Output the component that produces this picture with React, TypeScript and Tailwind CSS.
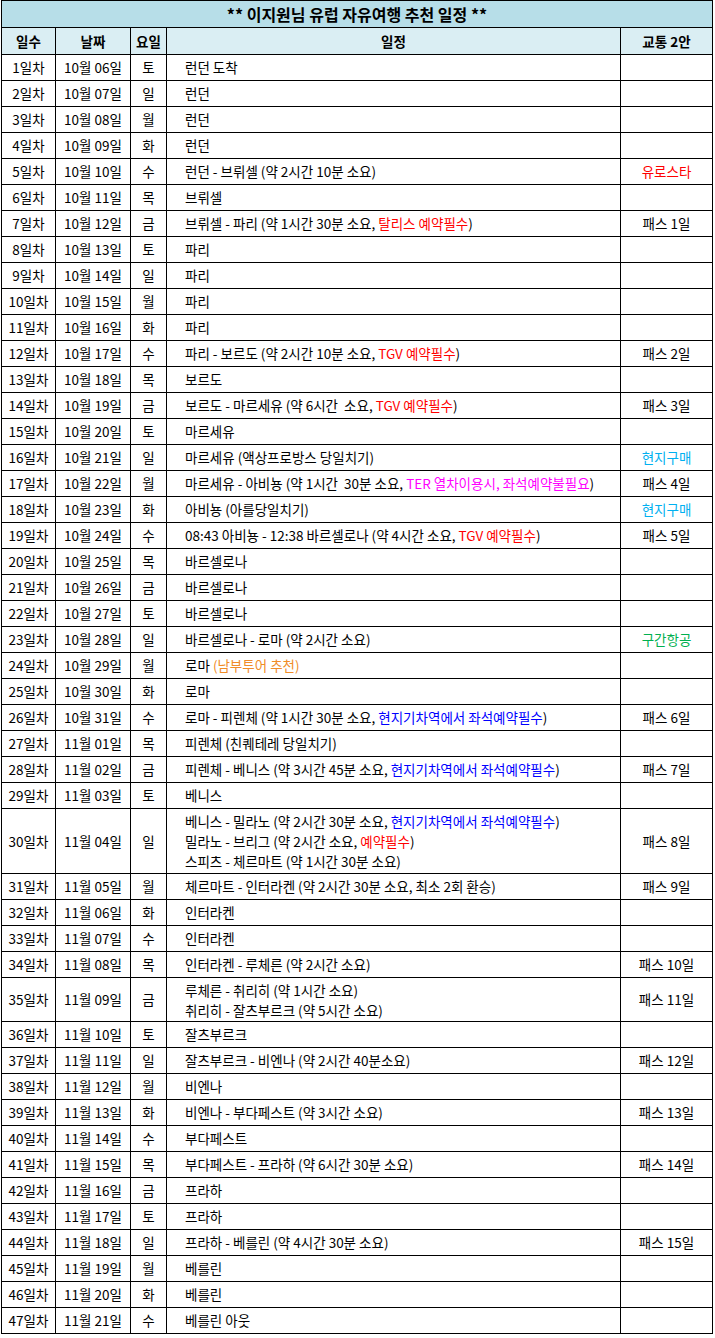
import React from "react";

type Seg = { t: string; c?: string };
type Row = {
  n: number;
  m: string;
  d: string;
  w: string;
  lines: Seg[][];
  tr?: Seg;
  h?: string;
};

const K = (t: string): Seg => ({ t });
const R = (t: string): Seg => ({ t, c: "text-[#ff0000]" });
const B = (t: string): Seg => ({ t, c: "text-[#0000ff]" });
const M = (t: string): Seg => ({ t, c: "text-[#ff00ff]" });
const O = (t: string): Seg => ({ t, c: "text-[#f08c28]" });
const C = (t: string): Seg => ({ t, c: "text-[#00b0f0]" });
const G = (t: string): Seg => ({ t, c: "text-[#00b050]" });

const P = (n: number): Seg => K(`패스 ${n}일`);

const rows: Row[] = [
  { n: 1, m: "10", d: "06", w: "토", lines: [[K("런던 도착")]] },
  { n: 2, m: "10", d: "07", w: "일", lines: [[K("런던")]] },
  { n: 3, m: "10", d: "08", w: "월", lines: [[K("런던")]] },
  { n: 4, m: "10", d: "09", w: "화", lines: [[K("런던")]] },
  { n: 5, m: "10", d: "10", w: "수", lines: [[K("런던 - 브뤼셀 (약 2시간 10분 소요)")]], tr: R("유로스타") },
  { n: 6, m: "10", d: "11", w: "목", lines: [[K("브뤼셀")]] },
  { n: 7, m: "10", d: "12", w: "금", lines: [[K("브뤼셀 - 파리 (약 1시간 30분 소요, "), R("탈리스 예약필수"), K(")")]], tr: P(1) },
  { n: 8, m: "10", d: "13", w: "토", lines: [[K("파리")]] },
  { n: 9, m: "10", d: "14", w: "일", lines: [[K("파리")]] },
  { n: 10, m: "10", d: "15", w: "월", lines: [[K("파리")]] },
  { n: 11, m: "10", d: "16", w: "화", lines: [[K("파리")]] },
  { n: 12, m: "10", d: "17", w: "수", lines: [[K("파리 - 보르도 (약 2시간 10분 소요, "), R("TGV 예약필수"), K(")")]], tr: P(2) },
  { n: 13, m: "10", d: "18", w: "목", lines: [[K("보르도")]] },
  { n: 14, m: "10", d: "19", w: "금", lines: [[K("보르도 - 마르세유 (약 6시간  소요, "), R("TGV 예약필수"), K(")")]], tr: P(3) },
  { n: 15, m: "10", d: "20", w: "토", lines: [[K("마르세유")]] },
  { n: 16, m: "10", d: "21", w: "일", lines: [[K("마르세유 (액상프로방스 당일치기)")]], tr: C("현지구매") },
  { n: 17, m: "10", d: "22", w: "월", lines: [[K("마르세유 - 아비뇽 (약 1시간  30분 소요, "), M("TER 열차이용시, 좌석예약불필요"), K(")")]], tr: P(4) },
  { n: 18, m: "10", d: "23", w: "화", lines: [[K("아비뇽 (아를당일치기)")]], tr: C("현지구매") },
  { n: 19, m: "10", d: "24", w: "수", lines: [[K("08:43 아비뇽 - 12:38 바르셀로나 (약 4시간 소요, "), R("TGV 예약필수"), K(")")]], tr: P(5) },
  { n: 20, m: "10", d: "25", w: "목", lines: [[K("바르셀로나")]] },
  { n: 21, m: "10", d: "26", w: "금", lines: [[K("바르셀로나")]] },
  { n: 22, m: "10", d: "27", w: "토", lines: [[K("바르셀로나")]] },
  { n: 23, m: "10", d: "28", w: "일", lines: [[K("바르셀로나 - 로마 (약 2시간 소요)")]], tr: G("구간항공") },
  { n: 24, m: "10", d: "29", w: "월", lines: [[K("로마 "), O("(남부투어 추천)")]] },
  { n: 25, m: "10", d: "30", w: "화", lines: [[K("로마")]] },
  { n: 26, m: "10", d: "31", w: "수", lines: [[K("로마 - 피렌체 (약 1시간 30분 소요, "), B("현지기차역에서 좌석예약필수"), K(")")]], tr: P(6) },
  { n: 27, m: "11", d: "01", w: "목", lines: [[K("피렌체 (친퀘테레 당일치기)")]] },
  { n: 28, m: "11", d: "02", w: "금", lines: [[K("피렌체 - 베니스 (약 3시간 45분 소요, "), B("현지기차역에서 좌석예약필수"), K(")")]], tr: P(7) },
  { n: 29, m: "11", d: "03", w: "토", lines: [[K("베니스")]] },
  {
    n: 30, m: "11", d: "04", w: "일", h: "h-[65px]",
    lines: [
      [K("베니스 - 밀라노 (약 2시간 30분 소요, "), B("현지기차역에서 좌석예약필수"), K(")")],
      [K("밀라노 - 브리그 (약 2시간 소요, "), R("예약필수"), K(")")],
      [K("스피츠 - 체르마트 (약 1시간 30분 소요)")],
    ],
    tr: P(8),
  },
  { n: 31, m: "11", d: "05", w: "월", lines: [[K("체르마트 - 인터라켄 (약 2시간 30분 소요, 최소 2회 환승)")]], tr: P(9) },
  { n: 32, m: "11", d: "06", w: "화", lines: [[K("인터라켄")]] },
  { n: 33, m: "11", d: "07", w: "수", lines: [[K("인터라켄")]] },
  { n: 34, m: "11", d: "08", w: "목", lines: [[K("인터라켄 - 루체른 (약 2시간 소요)")]], tr: P(10) },
  {
    n: 35, m: "11", d: "09", w: "금", h: "h-[44px]",
    lines: [[K("루체른 - 취리히 (약 1시간 소요)")], [K("취리히 - 잘츠부르크 (약 5시간 소요)")]],
    tr: P(11),
  },
  { n: 36, m: "11", d: "10", w: "토", lines: [[K("잘츠부르크")]] },
  { n: 37, m: "11", d: "11", w: "일", lines: [[K("잘츠부르크 - 비엔나 (약 2시간 40분소요)")]], tr: P(12) },
  { n: 38, m: "11", d: "12", w: "월", lines: [[K("비엔나")]] },
  { n: 39, m: "11", d: "13", w: "화", lines: [[K("비엔나 - 부다페스트 (약 3시간 소요)")]], tr: P(13) },
  { n: 40, m: "11", d: "14", w: "수", lines: [[K("부다페스트")]] },
  { n: 41, m: "11", d: "15", w: "목", lines: [[K("부다페스트 - 프라하 (약 6시간 30분 소요)")]], tr: P(14) },
  { n: 42, m: "11", d: "16", w: "금", lines: [[K("프라하")]] },
  { n: 43, m: "11", d: "17", w: "토", lines: [[K("프라하")]] },
  { n: 44, m: "11", d: "18", w: "일", lines: [[K("프라하 - 베를린 (약 4시간 30분 소요)")]], tr: P(15) },
  { n: 45, m: "11", d: "19", w: "월", lines: [[K("베를린")]] },
  { n: 46, m: "11", d: "20", w: "화", lines: [[K("베를린")]] },
  { n: 47, m: "11", d: "21", w: "수", lines: [[K("베를린 아웃")]] },
];

const cell = "border border-black p-0 align-middle";

function Segs({ segs, multi }: { segs: Seg[]; multi: boolean }) {
  return (
    <div className={`whitespace-pre ${multi ? "leading-[20px]" : "leading-[17px]"}`}>
      {segs.map((s, i) => (
        <span key={i} className={s.c}>
          {s.t}
        </span>
      ))}
    </div>
  );
}

export default function App() {
  return (
    <div
      className="bg-white text-[13.5px] leading-[17px] text-black"
      style={{ fontFamily: '"Noto Sans CJK KR", "Noto Sans", sans-serif' }}
    >
      <table className="ml-[1px] w-[711px] table-fixed border-collapse">
        <colgroup>
          <col className="w-[54px]" />
          <col className="w-[75px]" />
          <col className="w-[36px]" />
          <col className="w-[454px]" />
          <col className="w-[92px]" />
        </colgroup>
        <thead>
          <tr className="h-[27px] bg-[#b7dee8]">
            <th colSpan={5} className={`${cell} text-center text-[16px] font-bold`}>
              ** 이지원님 유럽 자유여행 추천 일정 **
            </th>
          </tr>
          <tr className="h-[27px] bg-[#daeef3]">
            <th className={`${cell} text-center font-bold`}>일수</th>
            <th className={`${cell} text-center font-bold`}>날짜</th>
            <th className={`${cell} text-center font-bold`}>요일</th>
            <th className={`${cell} text-center font-bold`}>일정</th>
            <th className={`${cell} text-center font-bold`}>교통 2안</th>
          </tr>
        </thead>
        <tbody>
          {rows.map((r) => (
            <tr key={r.n} className={r.h ?? "h-[26px]"}>
              <td className={`${cell} text-center`}>{r.n}일차</td>
              <td className={`${cell} text-center`}>
                {r.m}월 {r.d}일
              </td>
              <td className={`${cell} text-center`}>{r.w}</td>
              <td className={`${cell} pl-[18px]`}>
                {r.lines.map((l, i) => (
                  <Segs key={i} segs={l} multi={r.lines.length > 1} />
                ))}
              </td>
              <td className={`${cell} text-center`}>
                {r.tr ? <span className={r.tr.c}>{r.tr.t}</span> : null}
              </td>
            </tr>
          ))}
        </tbody>
      </table>
    </div>
  );
}
